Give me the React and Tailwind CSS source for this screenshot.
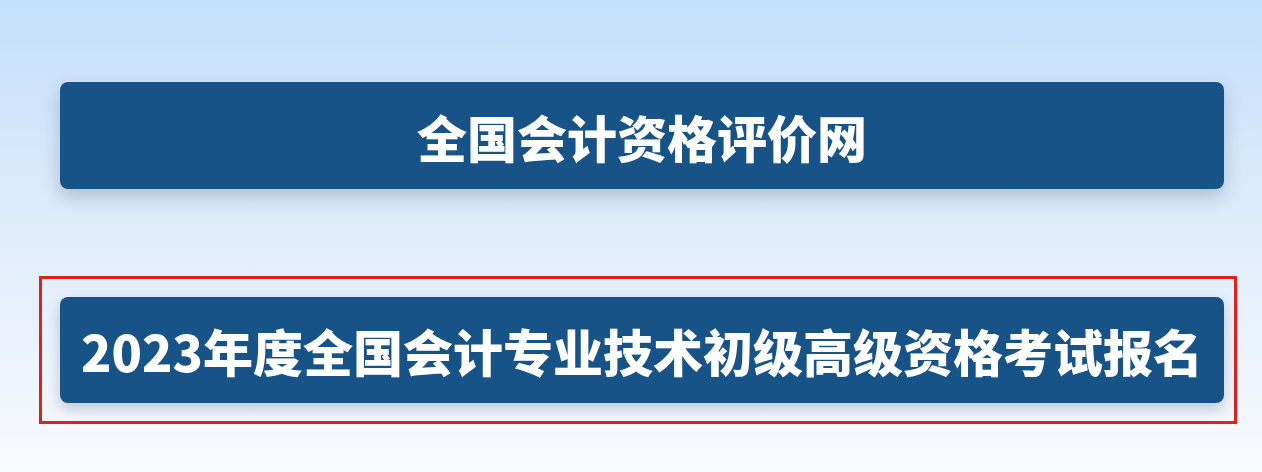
export default function App() {
  return (
    <div
      className="w-[1262px] h-[472px] overflow-hidden bg-gradient-to-b from-[#c4dffa] via-[#dfedfb] to-[#f8fafd]"
      style={{ fontFamily: '"Noto Sans CJK SC", "Noto Sans", sans-serif' }}
    >
      <div className="flex flex-col pt-[82px]">
        {/* site title bar */}
        <div className="ml-[60px] w-[1164px] h-[107px] rounded-[8px] bg-[#175386] shadow-[0_8px_18px_rgba(60,80,110,0.28)] flex items-center justify-center">
          <span className="text-white font-black text-[50px] leading-none">
            全国会计资格评价网
          </span>
        </div>

        {/* highlighted registration link */}
        <div className="mt-[87px] ml-[39px] w-[1198px] h-[148px] border-[3px] border-[#e0201c] flex items-center">
          <div className="ml-[18px] w-[1164px] h-[106px] rounded-[8px] bg-[#175386] shadow-[0_6px_14px_rgba(60,80,110,0.28)] flex items-center justify-center">
            <span className="text-white font-black text-[50px] leading-none whitespace-nowrap">
              2023年度全国会计专业技术初级高级资格考试报名
            </span>
          </div>
        </div>
      </div>
    </div>
  );
}
